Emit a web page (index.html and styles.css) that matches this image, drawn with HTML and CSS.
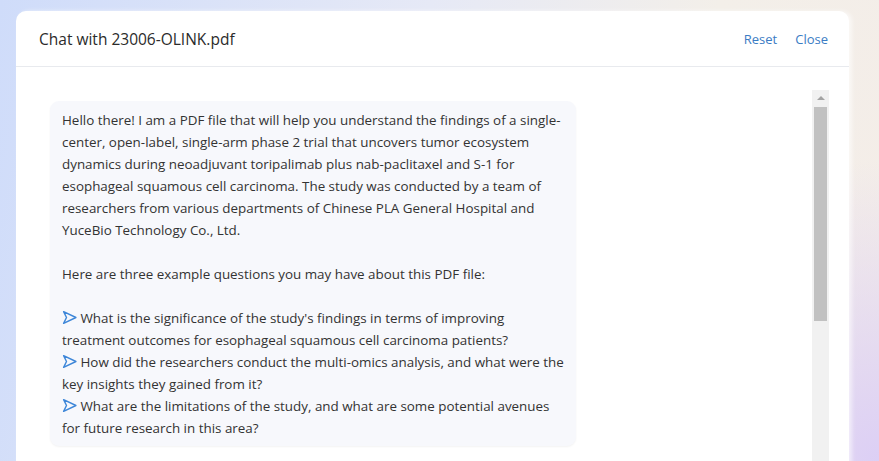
FILE: index.html
```html
<!DOCTYPE html>
<html>
<head>
<meta charset="utf-8">
<link rel="stylesheet" href="styles.css">
</head>
<body>
<div class="card">
  <header class="head">
    <h1 class="title">Chat with 23006-OLINK.pdf</h1>
    <nav class="actions">
      <a class="link">Reset</a>
      <a class="link">Close</a>
    </nav>
  </header>
  <div class="body">
    <div class="messages">
      <div class="bubble">
        <p class="line">Hello there! I am a PDF file that will help you understand the findings of a single-</p>
        <p class="line">center, open-label, single-arm phase 2 trial that uncovers tumor ecosystem</p>
        <p class="line">dynamics during neoadjuvant toripalimab plus nab-paclitaxel and S-1 for</p>
        <p class="line">esophageal squamous cell carcinoma. The study was conducted by a team of</p>
        <p class="line">researchers from various departments of Chinese PLA General Hospital and</p>
        <p class="line">YuceBio Technology Co., Ltd.</p>
        <p class="line blank">&nbsp;</p>
        <p class="line">Here are three example questions you may have about this PDF file:</p>
        <p class="line blank">&nbsp;</p>
        <p class="line"><svg class="icon" viewBox="0 0 14 14"><path d="M1.5 1.5 L13 7 L1.5 12.5 L4.2 7 Z" /></svg> What is the significance of the study's findings in terms of improving</p>
        <p class="line">treatment outcomes for esophageal squamous cell carcinoma patients?</p>
        <p class="line"><svg class="icon" viewBox="0 0 14 14"><path d="M1.5 1.5 L13 7 L1.5 12.5 L4.2 7 Z" /></svg> How did the researchers conduct the multi-omics analysis, and what were the</p>
        <p class="line">key insights they gained from it?</p>
        <p class="line"><svg class="icon" viewBox="0 0 14 14"><path d="M1.5 1.5 L13 7 L1.5 12.5 L4.2 7 Z" /></svg> What are the limitations of the study, and what are some potential avenues</p>
        <p class="line">for future research in this area?</p>
      </div>
    </div>
    <div class="scrollbar">
      <div class="arrow"></div>
      <div class="thumb"></div>
    </div>
  </div>
</div>
</body>
</html>
```

FILE: styles.css
```css
html, body {
  margin: 0;
  height: 100%;
  overflow: hidden;
}
body {
  background:
    radial-gradient(ellipse 300px 300px at 879px 461px, #dccff5 0%, rgba(220,207,245,0) 100%),
    linear-gradient(100deg, #cfdcfa 0%, #e6e9f6 45%, #f3efe9 75%, #f4ede8 100%);
  font-family: "Open Sans", "Noto Sans", sans-serif;
  padding: 11px 30px 0 16px;
  box-sizing: border-box;
}
.card {
  background: #fff;
  border-radius: 10px 10px 0 0;
  width: 833px;
  height: 470px;
  box-shadow: 3px 0 4px rgba(255,255,255,0.6);
  display: flex;
  flex-direction: column;
}
.head {
  height: 56px;
  box-sizing: border-box;
  border-bottom: 1px solid #e8eaee;
  display: flex;
  align-items: center;
  justify-content: space-between;
  padding: 0 21px 0 23px;
}
.title {
  margin: 0;
  font-size: 15.5px;
  font-weight: 500;
  color: #2b2b2b;
}
.actions {
  display: flex;
  gap: 18px;
}
.link {
  color: #3b7cc4;
  font-size: 13px;
}
.body {
  display: flex;
  padding: 23px 20px 0 34px;
}
.messages {
  flex: 1;
  padding-top: 11px;
}
.bubble {
  width: 526px;
  box-sizing: border-box;
  background: #f7f8fc;
  border-radius: 9px;
  box-shadow: 0 1px 2px rgba(0,0,0,0.05);
  padding: 8px 12px 7px 12px;
  font-size: 13.4px;
  color: #333;
}
.line {
  margin: 0;
  line-height: 22px;
  white-space: nowrap;
}
.icon {
  width: 15px;
  height: 15px;
  vertical-align: -2px;
  fill: none;
  stroke: #3d86d8;
  stroke-width: 1.3;
  stroke-linejoin: round;
}
.scrollbar {
  width: 17px;
  height: 380px;
  background: #f1f1f1;
  display: flex;
  flex-direction: column;
  align-items: center;
}
.arrow {
  margin-top: 6px;
  width: 0;
  height: 0;
  border-left: 4px solid transparent;
  border-right: 4px solid transparent;
  border-bottom: 4px solid #a3a3a3;
}
.thumb {
  margin-top: 7px;
  width: 13px;
  height: 214px;
  background: #c1c1c1;
}
```
